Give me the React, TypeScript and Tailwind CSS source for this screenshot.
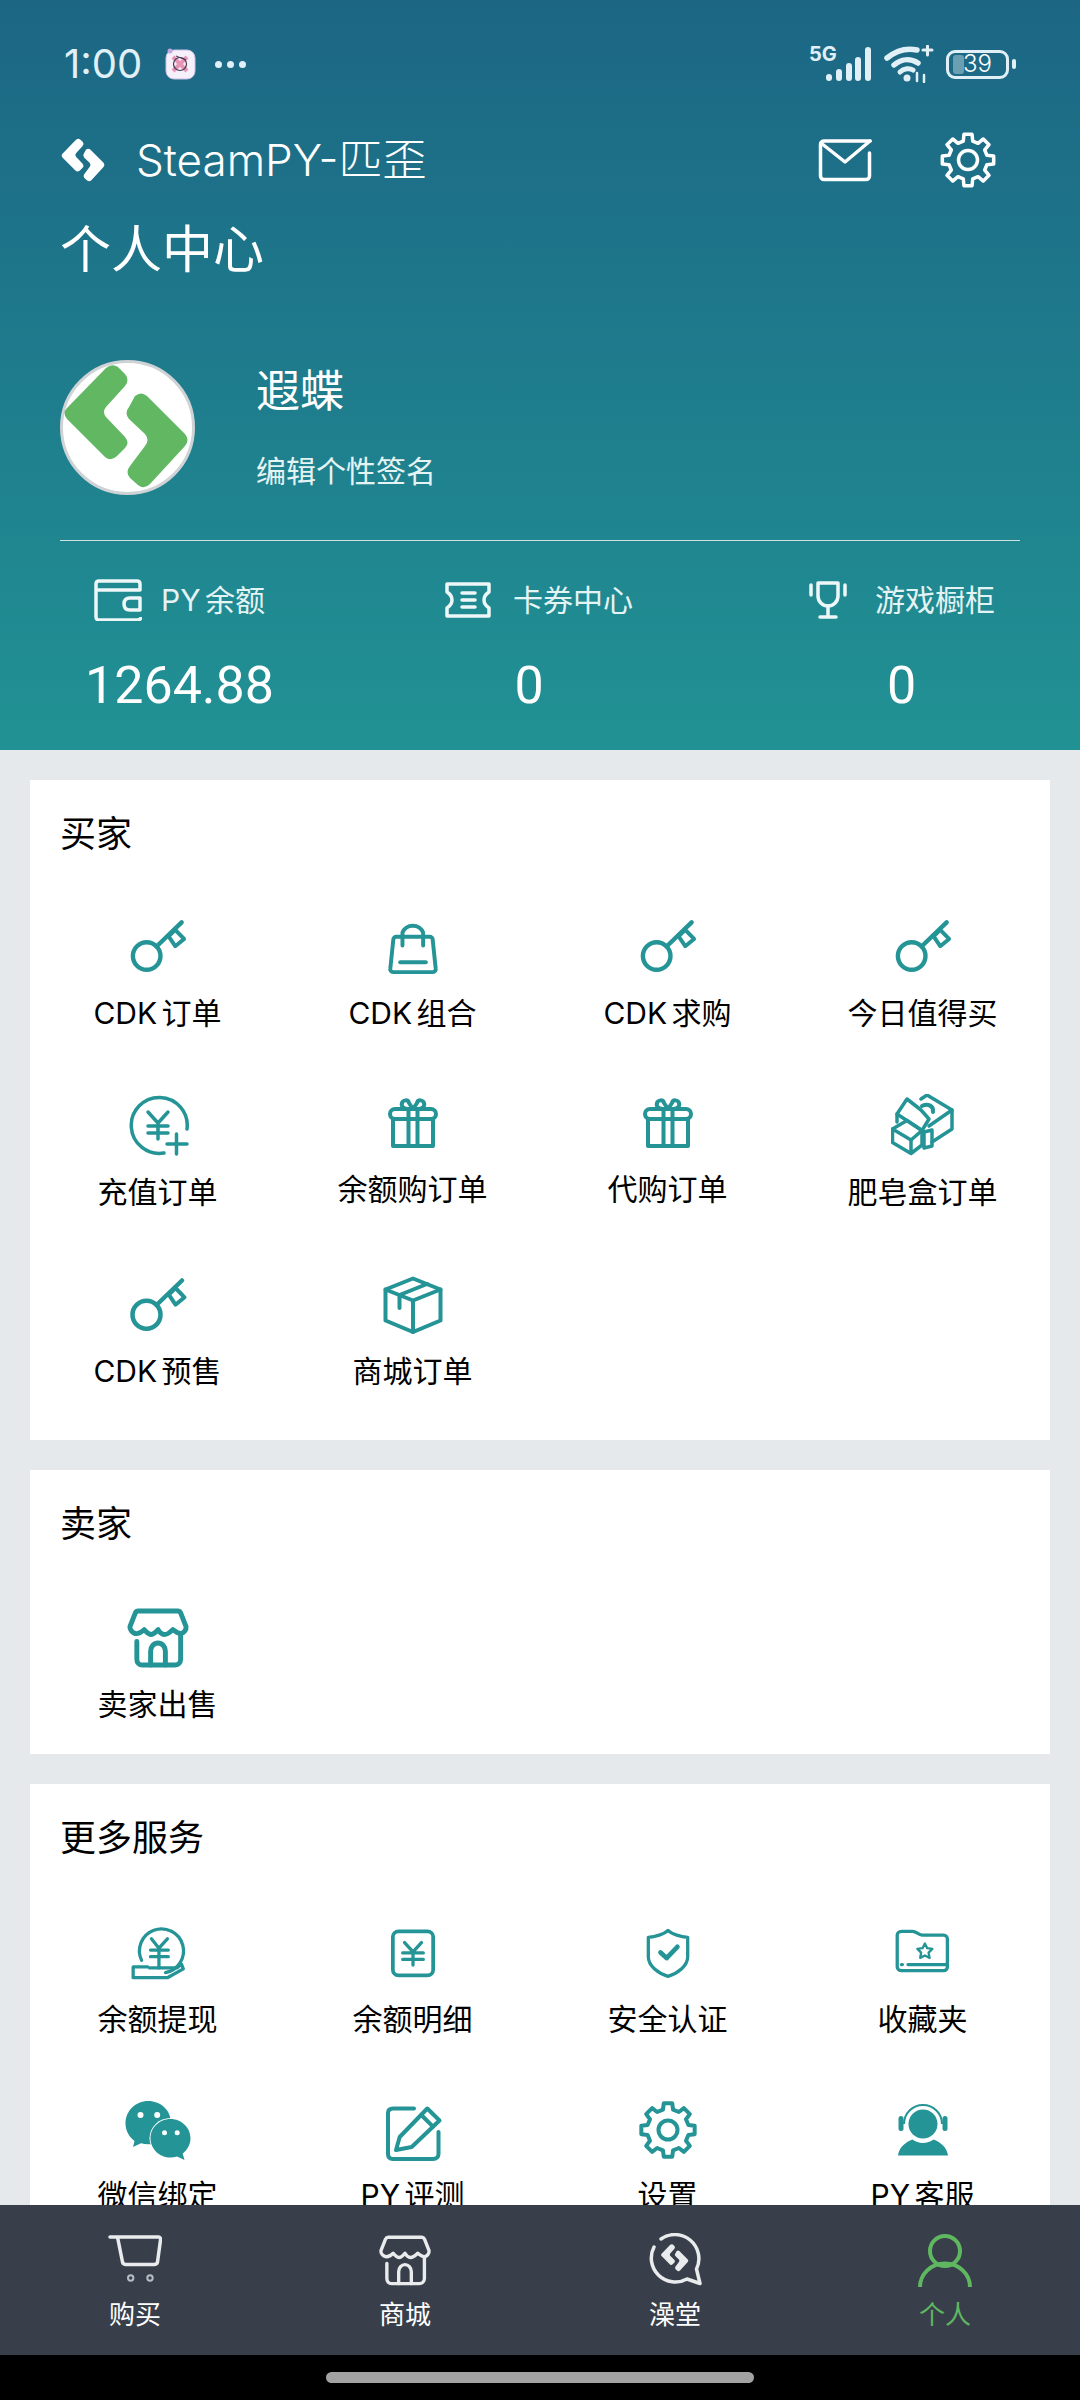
import type { ReactNode } from 'react'

const TEAL = '#249496'

// 8 tooth gear outline, computed because writing it by hand is worse
function gearPath(cx: number, cy: number, rOut: number, rIn: number) {
  const pts: string[] = []
  for (let i = 0; i < 8; i++) {
    const a = i * 45 - 90
    for (const [r, d] of [[rIn, -14], [rOut, -9], [rOut, 9], [rIn, 14]] as const) {
      const t = ((a + d) * Math.PI) / 180
      pts.push(`${(cx + r * Math.cos(t)).toFixed(2)} ${(cy + r * Math.sin(t)).toFixed(2)}`)
    }
  }
  return 'M' + pts.join('L') + 'Z'
}

function Svg({ children, stroke = TEAL, sw = 3.5, box = 64, className = 'w-16 h-16' }: { children: ReactNode; stroke?: string; sw?: number; box?: number; className?: string }) {
  return (
    <svg viewBox={`0 0 ${box} ${box}`} className={className} fill="none" stroke={stroke} strokeWidth={sw} strokeLinecap="round" strokeLinejoin="round">
      {children}
    </svg>
  )
}

const KeyIcon = () => (
  <Svg sw={4.5}>
    <circle cx="20.5" cy="41.7" r="14" />
    <path d="M30.5 32 56 7.5" />
    <path d="M42.8 21.7 49.5 31.7 58.5 24.3 49.5 15Z" strokeWidth="4" />
  </Svg>
)

const BagIcon = () => (
  <Svg sw={4}>
    <path d="M15 22H49a3 3 0 0 1 3 3L55 54a3 3 0 0 1-3 4H12a3 3 0 0 1-3-4L12 25a3 3 0 0 1 3-3Z" />
    <path d="M21.3 31V18a11 10 0 0 1 21 0V31" />
    <path d="M19 48H45" />
  </Svg>
)

const ChargeIcon = () => (
  <Svg sw={3.5}>
    <path d="M61 35A28 28 0 1 0 38 59" />
    <path d="M22 18 32 29 42 18M22 32H42M22 39H42M32 29V45" />
    <path d="M41 50H61M50.5 40V60" />
  </Svg>
)

const GiftIcon = () => (
  <Svg sw={4}>
    <rect x="9" y="15" width="46" height="10" rx="5" />
    <path d="M12 25V52H52V25" />
    <path d="M27.5 15V52M36.5 15V52" />
    <path d="M27.5 15C22 15 20 12 21 9S27 5 28 9L32 15 36 9C37 5 42 6 43 9S42 15 36.5 15" />
  </Svg>
)

const BoxIcon = () => (
  <Svg sw={4}>
    <path d="M32 5.5 59.5 16.5V47.5L32 59 4.5 47.5V16.5Z" />
    <path d="M4.5 16.5 32 27.5 59.5 16.5M32 27.5V59" />
    <path d="M46 11 18.5 22V35" />
  </Svg>
)

const SoapIcon = () => (
  <Svg sw={3.5}>
    <path d="M30 5 36 1 61 16V35L41 48" />
    <path d="M61 16 38 32" />
    <path d="M16 5 6 20 31 36.5 38 25 30 16Z" />
    <path d="M6 20V28" />
    <path d="M1.5 35 16 26.5 31 36.5 20 46Z" />
    <path d="M1.5 35V48.5L20 59.5V46M20 59.5 31 51V36.5" />
    <path d="M33 38 41 36V52L33 54Z" />
    <path d="M31 12C37 9 43 12 42 18" strokeWidth="4" />
  </Svg>
)

const ShopIcon = ({ stroke = TEAL, sw = 5, className = 'w-16 h-16' }: { stroke?: string; sw?: number; className?: string }) => (
  <Svg stroke={stroke} sw={sw} className={className}>
    <path d="M12 5H52C53.5 5 54.5 6 55 7L60.5 21C61 24 58 28 55 28 52 28 50 26 47 24 44 27 41 29 38.5 29 36 29 33 26 32 24 30 26 28 29 25 29 22 29 20 26 18 24 15 27 12 28.5 9 28 6 27 3 24 3.5 21L9 7C9.5 6 10.5 5 12 5Z" />
    <path d="M10.5 36V54C10.5 58 13 60 16 60H49C52 60 55 58 55 54V30" />
    <path d="M24.5 60V46C24.5 41 28 37.5 32 37.5S39.5 41 39.5 46V60" />
  </Svg>
)

const WithdrawIcon = () => (
  <Svg sw={3.5}>
    <path d="M14.5 42A23.5 23.5 0 1 1 40 55" />
    <path d="M25 19 33 29 42 19M24 31H43M24 38H43M33 29V50" />
    <path d="M23 50H52.5L57 46 59 51 42 60.5H5.5V49H21" />
  </Svg>
)

const LedgerIcon = () => (
  <Svg sw={4}>
    <rect x="10.5" y="11" width="43" height="47" rx="6" />
    <path d="M23 23 32 33 41 23M21 34H43M21 41H43M32 33V47" strokeWidth="3.5" />
  </Svg>
)

const ShieldIcon = () => (
  <Svg sw={3.5}>
    <path d="M32 10C36 14 46 17 53 17.5V38C53 48 42 56 32 59 22 56 11 48 11 38V17.5C18 17 28 14 32 10Z" />
    <path d="M24 33.5 30.5 39.5 42 27.5" strokeWidth="5" />
  </Svg>
)

const FolderIcon = () => (
  <Svg sw={3.5}>
    <path d="M9 11H21C25 11 27 15 31 15H54C56.5 15 58 17 58 19V49C58 51.5 56 53 54 53H9C6.5 53 4.5 51 4.5 49V15C4.5 13 6.5 11 9 11Z" />
    <path d="M9 46.5H10M16 46.5H58" />
    <path d="M34 24 36.5 29 42 29.8 38 33.8 39 39.3 34 36.8 29 39.3 30 33.8 26 29.8 31.5 29Z" strokeWidth="2.5" />
  </Svg>
)

const WechatIcon = () => (
  <svg viewBox="0 0 64 64" className="w-16 h-16 overflow-visible">
    <path d="M22.2 3C9.6 3-.5 13-.5 25.3c0 7.3 3.5 13.6 9 17.7L7 49l8-3.7c2.3.7 4.7 1 7.2 1 12.6 0 22.7-10 22.7-22S34.8 3 22.2 3Z" fill={TEAL} />
    <ellipse cx="44.5" cy="40.3" rx="21" ry="20.3" fill="#fff" />
    <path d="M44.5 21C33.5 21 24.5 29.6 24.5 40.3s9 19.3 20 19.3c2.3 0 4.5-.4 6.6-1.1L58.5 62l-1.8-6.5c4.7-3.5 7.8-9 7.8-15.2C64.5 29.6 55.5 21 44.5 21Z" fill={TEAL} />
    <circle cx="14.5" cy="17" r="3" fill="#fff" />
    <circle cx="31.2" cy="17" r="3" fill="#fff" />
    <circle cx="38.5" cy="34.7" r="2.5" fill="#fff" />
    <circle cx="51.2" cy="34.7" r="2.5" fill="#fff" />
  </svg>
)

const EditIcon = () => (
  <Svg sw={4}>
    <path d="M33 10.5H12C8.5 10.5 7 12 7 15V56C7 59 8.5 61 12 61H52C55.5 61 57.5 59 57.5 56V34" />
    <path d="M15 52 18.7 39 46.3 10.5 58.5 22.5 30.7 49Z" />
    <path d="M40.3 17 52 28.7" />
  </Svg>
)

const GearIcon = () => (
  <Svg sw={4}>
    <path d={gearPath(32, 32, 27, 21)} />
    <circle cx="32" cy="32" r="9.5" />
  </Svg>
)

const ServiceIcon = () => (
  <svg viewBox="0 0 64 64" className="w-16 h-16">
    <circle cx="32" cy="26" r="14.5" fill={TEAL} />
    <path d="M13 26A19 19 0 0 1 51 26" fill="none" stroke={TEAL} strokeWidth="2" />
    <rect x="7.5" y="18" width="5" height="15" rx="2.5" fill={TEAL} />
    <rect x="51.5" y="18" width="5" height="15" rx="2.5" fill={TEAL} />
    <path d="M7 57.5C8 49 15 44 21.5 41.5 27.5 46 36.5 46 42.5 41.5 49 44 56 49 57 57.5Z" fill={TEAL} />
  </svg>
)

// the S mark is used by the header, the avatar and the forum tab
function SMark({ fill, className }: { fill: string; className: string }) {
  return (
    <svg viewBox="0 0 135 135" className={className} fill={fill}>
      <path d="M46 8Q52 3 58 7L65 14Q70 20 65 26L46 47Q42 52 46 57L65 77Q70 83 65 88L57 96Q51 102 45 97L7 59Q2 53 7 48Z" />
      <path d="M75 36Q81 31 87 36L125 74Q130 80 125 86L90 124Q84 130 78 125L70 118Q65 112 70 106L85 86Q90 80 85 74L69 59Q64 53 69 47Z" />
    </svg>
  )
}

type Item = { label: string; icon: ReactNode; labelGap?: string }

function Section({ title, items, pad, gridClass = 'mt-[27px] gap-y-[61px]' }: { title: string; items: Item[]; pad: string; gridClass?: string }) {
  return (
    <section className={`bg-white ${pad}`}>
      <h2 className="h-[108px] pl-[30px] flex items-center text-[36px] text-black">{title}</h2>
      <div className={`grid grid-cols-4 ${gridClass}`}>
        {items.map((it) => (
          <div key={it.label} className="flex flex-col items-center h-[118px]">
            {it.icon}
            <span className={`${it.labelGap ?? 'mt-[14px]'} h-10 leading-10 text-[30px] text-black whitespace-nowrap [word-spacing:-4px]`}>{it.label}</span>
          </div>
        ))}
      </div>
    </section>
  )
}

function Stat({ icon, label, value, width, valueClass }: { icon: ReactNode; label: string; value: string; width: string; valueClass?: string }) {
  return (
    <div className={`${width} shrink-0`}>
      <div className="h-12 flex items-center justify-between">
        {icon}
        <span className="text-[30px] text-[#e4f3f4] whitespace-nowrap [word-spacing:-4px]">{label}</span>
      </div>
      <div className={`mt-[30px] h-16 leading-[64px] flex justify-center whitespace-nowrap text-[52px] text-white [font-family:Roboto,sans-serif] ${valueClass ?? ''}`}>{value}</div>
    </div>
  )
}

const buyer: Item[] = [
  { label: 'CDK 订单', icon: <KeyIcon />, labelGap: 'mt-[15px]' },
  { label: 'CDK 组合', icon: <BagIcon />, labelGap: 'mt-[15px]' },
  { label: 'CDK 求购', icon: <KeyIcon />, labelGap: 'mt-[15px]' },
  { label: '今日值得买', icon: <KeyIcon />, labelGap: 'mt-[15px]' },
  { label: '充值订单', icon: <ChargeIcon /> },
  { label: '余额购订单', icon: <GiftIcon />, labelGap: 'mt-[11px]' },
  { label: '代购订单', icon: <GiftIcon />, labelGap: 'mt-[11px]' },
  { label: '肥皂盒订单', icon: <SoapIcon /> },
  { label: 'CDK 预售', icon: <KeyIcon /> },
  { label: '商城订单', icon: <BoxIcon /> },
]

const more: Item[] = [
  { label: '余额提现', icon: <WithdrawIcon />, labelGap: 'mt-[18px]' },
  { label: '余额明细', icon: <LedgerIcon />, labelGap: 'mt-[18px]' },
  { label: '安全认证', icon: <ShieldIcon />, labelGap: 'mt-[18px]' },
  { label: '收藏夹', icon: <FolderIcon />, labelGap: 'mt-[18px]' },
  { label: '微信绑定', icon: <WechatIcon />, labelGap: 'mt-[13px]' },
  { label: 'PY 评测', icon: <EditIcon />, labelGap: 'mt-[13px]' },
  { label: '设置', icon: <GearIcon />, labelGap: 'mt-[13px]' },
  { label: 'PY 客服', icon: <ServiceIcon />, labelGap: 'mt-[13px]' },
]

function StatusBar() {
  return (
    <div className="h-12 flex items-center pl-[64px] pr-[64px] text-[#e0f0f6]">
      <span className="text-[40px] leading-none w-[100px]">1:00</span>
      <svg viewBox="0 0 32 32" className="w-8 h-8">
        <rect x="2" y="2" width="29" height="29" rx="8" fill="#f6f0fb" stroke="#cdbfe6" />
        <circle cx="6" cy="3" r="2.5" fill="#c4a8e0" />
        <path d="M9 9 23 23M23 9 9 23" stroke="#e795b4" strokeWidth="4" />
        <circle cx="16" cy="16" r="6.5" fill="none" stroke="#4a3350" strokeWidth="1.2" />
        <path d="M12 8 22 12" stroke="#4a3350" strokeWidth="1" />
      </svg>
      <div className="ml-[19px] flex gap-[5px]">
        <span className="w-[7px] h-[7px] rounded-full bg-[#e0f0f6]" />
        <span className="w-[7px] h-[7px] rounded-full bg-[#e0f0f6]" />
        <span className="w-[7px] h-[7px] rounded-full bg-[#e0f0f6]" />
      </div>
      <div className="ml-auto flex items-center">
        <div className="relative w-[62px] h-[34px]">
          <span className="absolute left-0 -top-[3px] text-[20px] leading-5 font-bold">5G</span>
          <svg viewBox="0 0 62 34" className="w-[62px] h-[34px]" stroke="#e0f0f6" strokeWidth="6" strokeLinecap="round">
            <path d="M20 30V31M30 25V31M40 19V31M49 13V31M59 3V31" />
          </svg>
        </div>
        <svg viewBox="0 0 50 38" className="ml-[13px] w-[50px] h-[38px]" fill="none" stroke="#e0f0f6" strokeLinecap="round">
          <path d="M3 13C13 5 24 3 33 5" strokeWidth="5.5" />
          <path d="M10 20C17 14 26 13 34 18" strokeWidth="5.5" />
          <path d="M16 27C20 23 26 23 29 25" strokeWidth="5" />
          <circle cx="23" cy="33" r="3.5" fill="#e0f0f6" stroke="none" />
          <path d="M39 5H48M43.5 1V10" strokeWidth="3" />
          <path d="M33 28V36M40 30V37" strokeWidth="2.5" />
        </svg>
        <div className="ml-[12px] relative w-[63px] h-[29px] rounded-[9px] border-[3px] border-[#e0f0f6]">
          <span className="absolute left-[4px] top-[2px] w-[11px] h-[19px] rounded-[3px] bg-[#e0f0f6]/40" />
          <span className="absolute inset-0 flex items-center justify-center text-[24px] leading-none text-white font-light">39</span>
        </div>
        <span className="ml-[3px] w-1 h-[10px] rounded-full bg-[#e0f0f6]" />
      </div>
    </div>
  )
}

function NavItem({ icon, label, active }: { icon: ReactNode; label: string; active?: boolean }) {
  return (
    <div className="flex flex-col items-center pt-[28px]">
      {icon}
      <span className={`mt-[10px] text-[26px] leading-9 ${active ? 'text-[#5fb760]' : 'text-white'}`}>{label}</span>
    </div>
  )
}

function BottomNav() {
  const white = '#e9ebed'
  return (
    <nav className="h-[150px] shrink-0 bg-[#383f4b] grid grid-cols-4">
      <NavItem
        label="购买"
        icon={
          <Svg stroke={white} sw={3.5} box={54} className="w-[54px] h-[54px]">
            <path d="M2 4H9.5L14.5 29C15 31 16 31.5 18 31.5H46C48 31.5 49 31 49.5 29L52.5 7C52.8 5 52 4 50 4H9.5" />
            <circle cx="22.7" cy="45" r="2.7" stroke="#b9bcc2" strokeWidth="2" />
            <circle cx="42" cy="45" r="2.7" stroke="#b9bcc2" strokeWidth="2" />
          </Svg>
        }
      />
      <NavItem label="商城" icon={<ShopIcon stroke={white} sw={4} className="w-[54px] h-[54px]" />} />
      <NavItem
        label="澡堂"
        icon={
          <div className="relative w-[54px] h-[54px]">
            <Svg stroke={white} sw={3.5} box={54} className="w-[54px] h-[54px]">
              <path d="M13 6A24 24 0 0 1 48.5 36L52 50.5 39 46A24 24 0 0 1 6 14" />
            </Svg>
            <SMark fill={white} className="absolute left-[12px] top-[10px] w-[30px] h-[30px]" />
          </div>
        }
      />
      <NavItem
        label="个人"
        active
        icon={
          <Svg stroke="#5fb760" sw={4} box={54} className="w-[54px] h-[54px]">
            <circle cx="27" cy="18" r="15" />
            <path d="M2 54C2 41 13 30.5 27 30.5S52 41 52 54" strokeLinecap="butt" />
          </Svg>
        }
      />
    </nav>
  )
}

export default function App() {
  return (
    <div className="w-[1080px] h-[2400px] flex flex-col overflow-hidden bg-[#e6e9ec] [font-family:Inter,'Noto_Sans_CJK_SC',sans-serif]">
      <div className="flex-1 min-h-0 overflow-hidden">
        <header className="h-[750px] pt-10 bg-gradient-to-b from-[#1c6684] to-[#219294]">
          <StatusBar />
          <div className="mt-10 h-16 flex items-center pl-[60px] pr-[82px] text-white">
            <SMark fill="#ffffff" className="w-[47px] h-[47px]" />
            <span className="ml-[29px] text-[44px] font-light">SteamPY-匹歪</span>
            <svg viewBox="0 0 54 44" className="ml-auto w-[54px] h-[44px]" fill="none" stroke="#fff" strokeWidth="3.5" strokeLinecap="round" strokeLinejoin="round">
              <path d="M52 3H6C4 3 2.5 4.5 2.5 6V38C2.5 40 4 41.5 6 41.5H48C50 41.5 51.5 40 51.5 38V15" />
              <path d="M3 5 27 24 52 3" />
            </svg>
            <svg viewBox="0 0 60 60" className="ml-[66px] w-[60px] h-[60px]" fill="none" stroke="#fff" strokeWidth="3.5" strokeLinejoin="round">
              <path d={gearPath(30, 30, 26, 19.5)} />
              <circle cx="30" cy="30" r="9.5" />
            </svg>
          </div>
          <h1 className="mt-[26px] h-16 leading-[64px] pl-[60px] text-[51px] text-white">个人中心</h1>
          <div className="mt-[78px] px-[60px] flex">
            <div className="w-[135px] h-[135px] rounded-full bg-white border-[3px] border-[#cfd3d6] flex items-center justify-center shrink-0">
              <SMark fill="#62b862" className="w-[135px] h-[135px] shrink-0" />
            </div>
            <div className="ml-[61px] text-white">
              <div className="mt-[3px] h-14 leading-[56px] text-[44px]">遐蝶</div>
              <div className="mt-[32px] h-10 leading-10 text-[30px] text-[#e4f3f4]">编辑个性签名</div>
            </div>
          </div>
          <div className="mt-[45px] mx-[60px] h-px bg-[#cfe3e6]" />
          <div className="mt-[35px] pl-[94px] flex">
            <Stat
              width="w-[171px]"
              label="PY 余额"
              value="1264.88"
              icon={
                <svg viewBox="0 0 48 42" className="w-12 h-[42px]" fill="none" stroke="#eef7f8" strokeWidth="3.5" strokeLinejoin="round">
                  <path d="M47 38C47 40 45 41 43 41H5C3 41 2 40 2 38V5C2 3 3 2 5 2H43C45 2 46 3 46 5V11H2" />
                  <path d="M46 19H36C31.5 19 30 22 30 25S31.5 31 36 31H46V19Z" />
                </svg>
              }
            />
            <div className="w-[180px] shrink-0" />
            <Stat
              width="w-[188px]"
              label="卡券中心"
              value="0"
              valueClass="pr-5"
              icon={
                <svg viewBox="0 0 46 36" className="w-[46px] h-9" fill="none" stroke="#eef7f8" strokeWidth="3.5" strokeLinejoin="round">
                  <path d="M2 2H44V10C41 12 39 15 39 18S41 24 44 26V34H2V26C5 24 7 21 7 18S5 12 2 10Z" />
                  <path d="M17 11H30M17 18H30M17 25H30" strokeLinecap="round" />
                </svg>
              }
            />
            <div className="w-[175px] shrink-0" />
            <Stat
              width="w-[187px]"
              label="游戏橱柜"
              value="0"
              icon={
                <svg viewBox="0 0 40 38" className="w-10 h-[38px]" fill="none" stroke="#eef7f8" strokeWidth="3.5" strokeLinecap="round" strokeLinejoin="round">
                  <path d="M10 2V15C10 21 15 25 20 25S30 21 30 15V2Z" />
                  <path d="M3 4V14M37 4V14M20 25V34M12 36H28" />
                </svg>
              }
            />
          </div>
        </header>
        <main className="pt-[30px] px-[30px] flex flex-col gap-[30px]">
          <Section title="买家" items={buyer} pad="pb-[49px]" />
          <Section title="卖家" items={[{ label: '卖家出售', icon: <ShopIcon />, labelGap: 'mt-[15px]' }]} pad="pb-[30px]" gridClass="mt-[28px]" />
          <Section title="更多服务" items={more} pad="pb-10" gridClass="mt-[29px] gap-y-[59px]" />
        </main>
      </div>
      <BottomNav />
      <div className="h-[45px] shrink-0 bg-black flex justify-center pt-[17px]">
        <span className="w-[428px] h-[11px] rounded-full bg-[#a3a3a3]" />
      </div>
    </div>
  )
}
